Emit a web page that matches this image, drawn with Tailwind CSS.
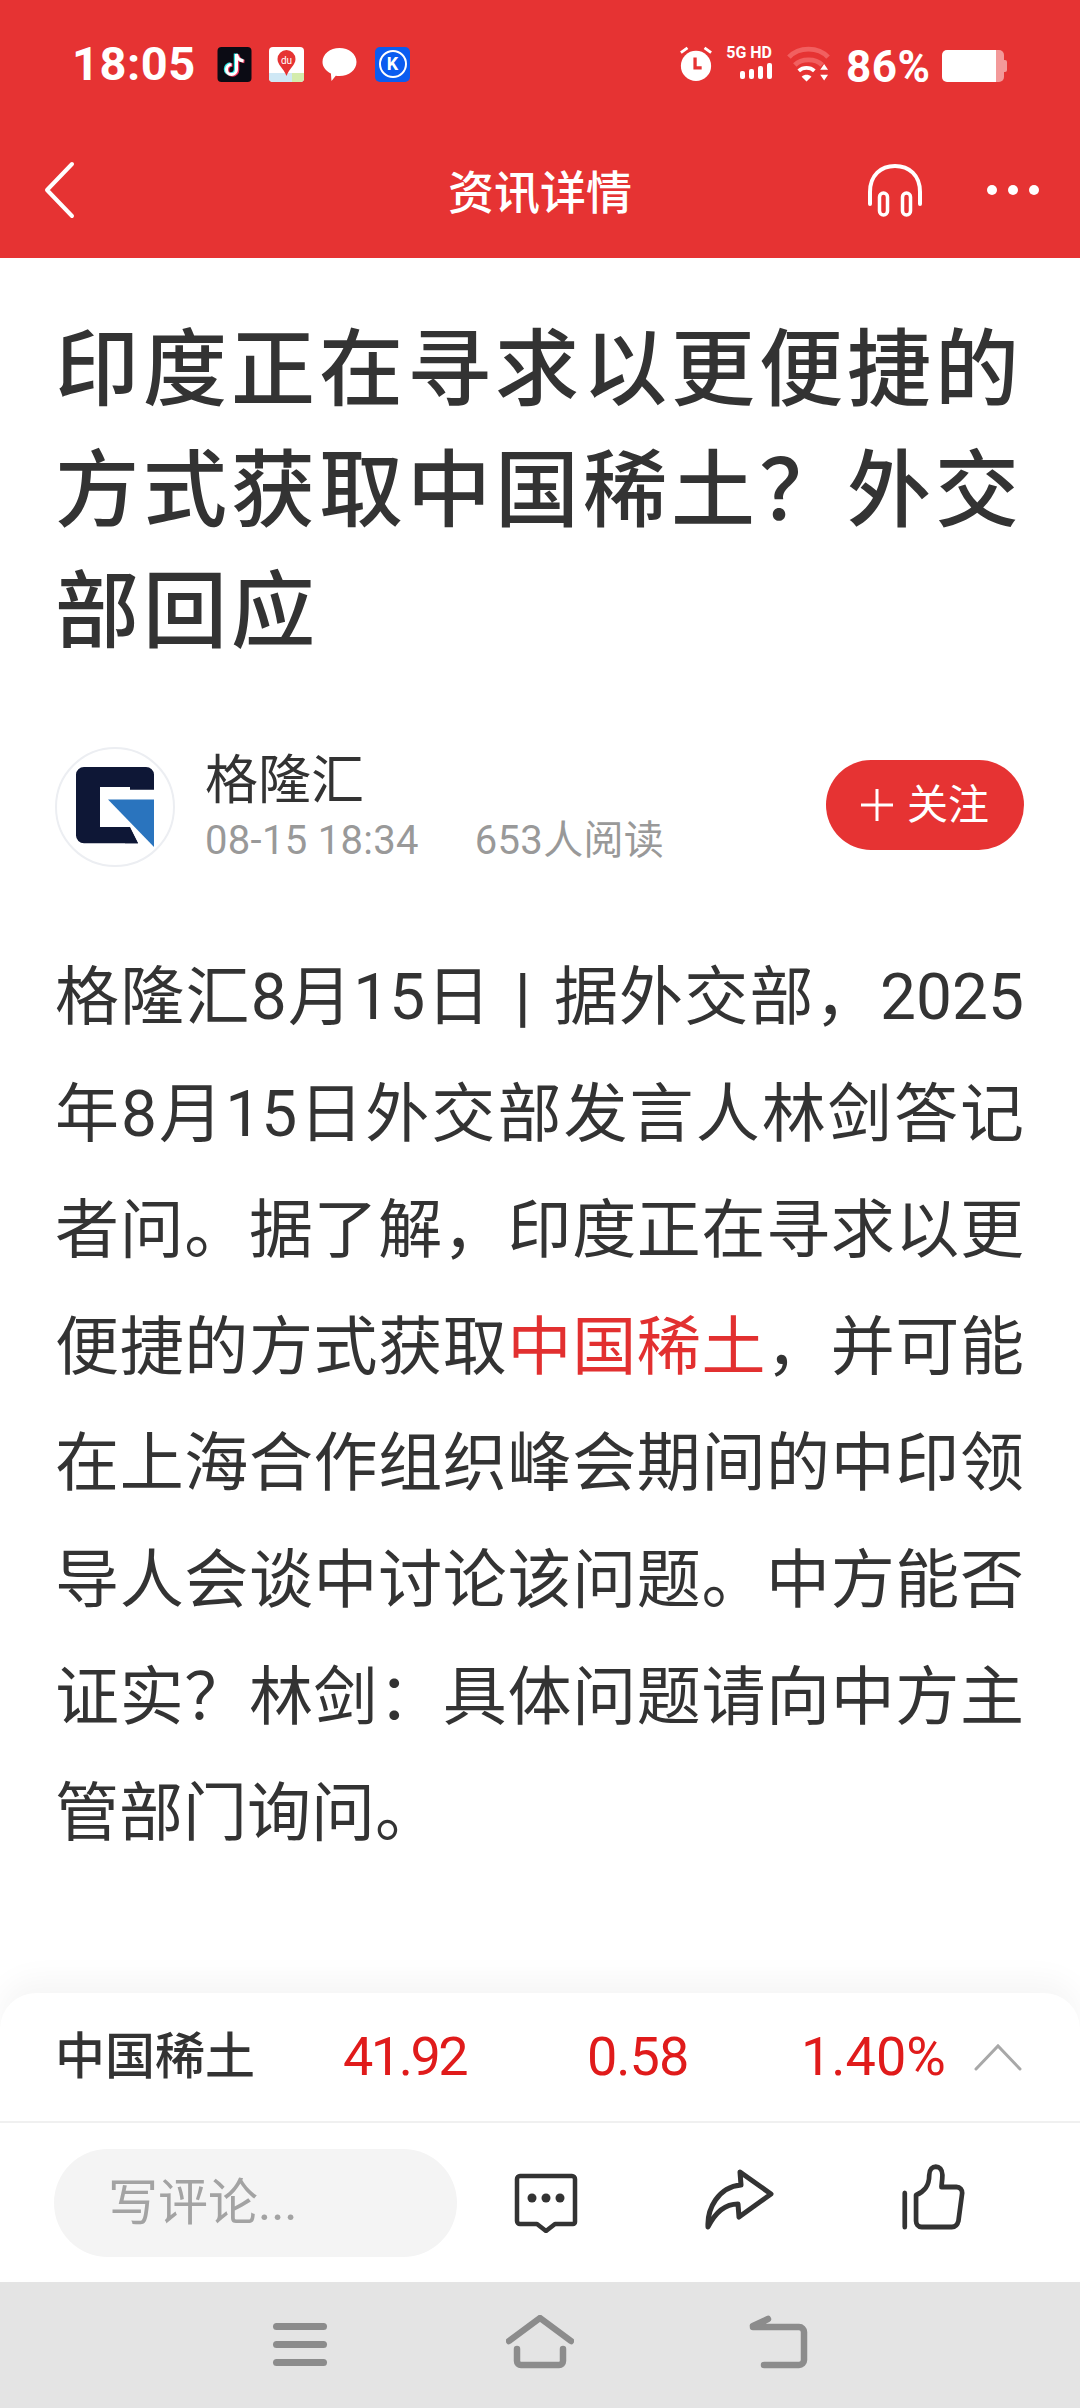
<!DOCTYPE html>
<html lang="zh-CN">
<head>
  <meta charset="UTF-8">
  <meta name="viewport" content="width=device-width, initial-scale=1.0">
  <title>资讯详情</title>
  <script src="https://cdn.jsdelivr.net/npm/@tailwindcss/browser@4"></script>
</head>
<body class="bg-white">
  <div class="w-[1080px] h-[2408px] flex flex-col overflow-hidden font-['Roboto','Noto_Sans_CJK_SC',sans-serif] text-[#333333]">

    <!-- red header -->
    <header class="h-[258px] shrink-0 bg-[#e63333] text-white">
      <div class="h-[126px] pl-[72px] pr-[73px] pt-[46px] flex justify-between items-start">
        <div class="flex items-center">
          <span class="text-[47px] leading-[36px] font-bold w-[145px] tracking-[0.5px]">18:05</span>
          <!-- tiktok -->
          <svg class="w-[35px] h-[35px]" viewBox="0 0 34 35">
            <rect width="34" height="35" rx="4" fill="#0b0b14"/>
            <path d="M19 7v15.500a5 5 0 1 1-5-5M19 7c.5 4 3.500 6.500 7 7" fill="none" stroke="#2fe6e6" stroke-width="3.500" transform="translate(-1 -.5)"/>
            <path d="M19 7v15.500a5 5 0 1 1-5-5M19 7c.5 4 3.500 6.500 7 7" fill="none" stroke="#f0365a" stroke-width="3.500" transform="translate(1 .5)"/>
            <path d="M19 7v15.500a5 5 0 1 1-5-5M19 7c.5 4 3.500 6.500 7 7" fill="none" stroke="#ffffff" stroke-width="3"/>
          </svg>
          <!-- baidu maps -->
          <div class="relative ml-[17px] w-[35px] h-[35px] rounded-[4px] bg-white overflow-hidden">
            <div class="absolute bottom-0 left-0 w-full h-[9px] bg-[#cfe8f5]"></div>
            <div class="absolute bottom-0 right-0 w-[12px] h-[9px] bg-[#d4ecac]"></div>
            <svg class="absolute left-[8px] top-[3px] w-[19px] h-[27px]" viewBox="0 0 18 27">
              <path d="M9 0a9 9 0 0 1 9 9c0 6-6 9-9 17C6 18 0 15 0 9a9 9 0 0 1 9-9z" fill="#e63333"/>
            </svg>
            <span class="absolute left-0 top-[8px] w-full text-center text-[10px] leading-[11px] text-white">du</span>
          </div>
          <!-- message bubble -->
          <svg class="ml-[18px] w-[35px] h-[35px]" viewBox="0 0 34 35">
            <path d="M17 1c9.400 0 17 5.900 17 14s-7.600 14-17 14c-1.300 0-2.500-.1-3.700-.3L9 34l-.6-7.400C3.300 24 0 19.800 0 15 0 6.900 7.600 1 17 1z" fill="#fff"/>
          </svg>
          <!-- K app -->
          <div class="ml-[18px] w-[35px] h-[35px] rounded-[5px] bg-[#0a5cf0] flex items-center justify-center">
            <div class="w-[28px] h-[28px] rounded-full border-[2px] border-white flex items-center justify-center text-[18px] leading-none font-bold">K</div>
          </div>
        </div>

        <div class="flex items-start">
          <!-- alarm -->
          <svg class="w-[34px] h-[36px]" viewBox="0 0 36 38">
            <circle cx="18" cy="21" r="16" fill="#fff"/>
            <path d="M17 12v11h7" fill="none" stroke="#e63333" stroke-width="3.500"/>
            <path d="M2 7l7-5M34 7l-7-5" stroke="#fff" stroke-width="3"/>
          </svg>
          <!-- 5G HD + signal -->
          <div class="ml-[11px] w-[48px] flex flex-col items-end">
            <span class="text-[16px] leading-[14px] font-bold whitespace-nowrap">5G HD</span>
            <div class="mt-[3px] flex items-end gap-[4px]">
              <span class="w-[5px] h-[8px] rounded-[2px] bg-white"></span>
              <span class="w-[5px] h-[10px] rounded-[2px] bg-white"></span>
              <span class="w-[5px] h-[13px] rounded-[2px] bg-white"></span>
              <span class="w-[5px] h-[16px] rounded-[2px] bg-white"></span>
            </div>
          </div>
          <!-- wifi -->
          <svg class="ml-[15px] w-[43px] h-[36px]" viewBox="0 0 44 36">
            <path d="M2 11c10-11 30-11 40 0" fill="none" stroke="#f16060" stroke-width="5"/>
            <path d="M8 19c7-7 21-7 28 0" fill="none" stroke="#f16060" stroke-width="5"/>
            <path d="M12 25c4.500-4 11.500-4 16 0" fill="none" stroke="#fff" stroke-width="4"/>
            <path d="M15 31c3-2.500 7-2.500 10 0l-5 5z" fill="#fff"/>
            <path d="M38 18l4 6h-8zM38 35l4-6h-8z" fill="#fff"/>
          </svg>
          <span class="ml-[16px] mt-[4px] w-[82px] text-[44px] leading-[34px] font-bold tracking-[0.5px]">86%</span>
          <!-- battery -->
          <div class="ml-[14px] mt-[3px] w-[65px] h-[33px] flex items-center">
            <div class="w-[54px] h-[32px] rounded-l-[5px] bg-white"></div>
            <div class="w-[8px] h-[32px] rounded-r-[5px] bg-white/50"></div>
            <div class="w-[3px] h-[12px] rounded-r-[2px] bg-white/50"></div>
          </div>
        </div>
      </div>

      <div class="relative h-[132px] pt-[13px]">
        <div class="h-[108px] flex items-center justify-center">
          <h1 class="text-[46px] font-medium leading-none">资讯详情</h1>
        </div>
        <svg class="absolute left-[43px] top-[35px] w-[32px] h-[58px]" viewBox="0 0 32 58">
          <path d="M29 3L4 29l25 26" fill="none" stroke="#fff" stroke-width="4" stroke-linecap="round" stroke-linejoin="round"/>
        </svg>
        <svg class="absolute left-[867px] top-[37px] w-[56px] h-[56px]" viewBox="0 0 56 56">
          <path d="M3 41V29C3 12 14 3 28 3s25 9 25 26v12" fill="none" stroke="#fff" stroke-width="4" stroke-linecap="round"/>
          <rect x="12.500" y="30" width="8" height="22" rx="4" fill="none" stroke="#fff" stroke-width="3.500"/>
          <rect x="35.500" y="30" width="8" height="22" rx="4" fill="none" stroke="#fff" stroke-width="3.500"/>
        </svg>
        <div class="absolute left-[987px] top-[59px] flex gap-[11px]">
          <span class="w-[10px] h-[10px] rounded-full bg-white"></span>
          <span class="w-[10px] h-[10px] rounded-full bg-white"></span>
          <span class="w-[10px] h-[10px] rounded-full bg-white"></span>
        </div>
      </div>
    </header>

    <!-- article -->
    <main class="flex-1 min-h-0 pl-[55px] pr-[56px] pt-[52px]">
      <h2 class="-mr-[4px] text-[84px] leading-[121px] font-medium tracking-[4px]">印度正在寻求以更便捷的方式获取中国稀土？外交部回应</h2>

      <div class="mt-[73px] flex items-center h-[122px]">
        <div class="w-[120px] h-[120px] rounded-full border-[2px] border-[#eceef2] bg-white flex items-center justify-center">
          <svg class="w-[78px] h-[80px]" viewBox="0 0 78 84" preserveAspectRatio="none">
            <path d="M8 0h62a8 8 0 0 1 8 8v16H54v-3H24v42h30L62 80H8a8 8 0 0 1-8-8V8a8 8 0 0 1 8-8z" fill="#0e1736"/>
            <path d="M32 34h46v50z" fill="#2a74be"/>
            <path d="M54 64h-5v16h13z" fill="#0e1736"/>
          </svg>
        </div>
        <div class="ml-[30px] flex-1">
          <div class="text-[53px] leading-[62px]">格隆汇</div>
          <div class="mt-[6px] text-[40px] leading-[46px] tracking-[0.3px] text-[#999999]">
            <span>08-15 18:34</span><span class="ml-[56px]">653人阅读</span>
          </div>
        </div>
        <div class="-mt-[4px] w-[198px] h-[90px] rounded-full bg-[#e63333] text-white flex items-center justify-center text-[41px] leading-none">
          <svg class="w-[32px] h-[32px] mr-[14px]" viewBox="0 0 32 32"><path d="M16 0v32M0 16h32" stroke="#fff" stroke-width="3"/></svg>
          <span>关注</span>
        </div>
      </div>

      <p class="mt-[72px] text-[64px] leading-[116.600px] text-justify">格隆汇8月15日<span class="mx-[6px] font-medium"> | </span>据外交部，2025年8月15日外交部发言人林剑答记者问。据了解，印度正在寻求以更便捷的方式获取<span class="text-[#e23030]">中国稀土</span>，并可能在上海合作组织峰会期间的中印领导人会谈中讨论该问题。中方能否证实？林剑：具体问题请向中方主管部门询问。</p>
    </main>

    <!-- stock strip + actions -->
    <section class="relative shrink-0 h-[289px] rounded-t-[36px] bg-white shadow-[0_-14px_30px_rgba(0,0,0,0.04)]">
      <div class="h-[130px] flex items-center pl-[55px] border-b-[2px] border-[#f0f0f0]">
        <span class="w-[288px] text-[50px] leading-none font-medium">中国稀土</span>
        <span class="w-[244px] text-[54px] leading-none tracking-[-2.500px] text-[#e01b1b]">41.92</span>
        <span class="w-[214px] text-[54px] leading-none tracking-[-1px] text-[#e01b1b]">0.58</span>
        <span class="w-[173px] text-[54px] leading-none text-[#e01b1b]">1.40%</span>
        <svg class="w-[48px] h-[28px]" viewBox="0 0 48 28"><path d="M2 26L24 3l22 23" fill="none" stroke="#a8a8a8" stroke-width="3" stroke-linecap="round"/></svg>
      </div>
      <div class="relative h-[159px]">
        <div class="absolute left-[54px] top-[26px] w-[403px] h-[108px] rounded-full bg-[#f4f4f4] flex items-center pl-[54px] text-[50px] leading-none text-[#a3a3a3]">写评论...</div>
        <svg class="absolute left-[514px] top-[50px] w-[64px] h-[60px]" viewBox="0 0 64 60">
          <path d="M6 3h52a3 3 0 0 1 3 3v43a2 2 0 0 1-2 2H41l-9 7-9-7H6a3 3 0 0 1-3-3V6a3 3 0 0 1 3-3z" fill="none" stroke="#333" stroke-width="4.500" stroke-linejoin="round"/>
          <circle cx="18" cy="25" r="4.500" fill="#333"/><circle cx="32" cy="25" r="4.500" fill="#333"/><circle cx="46" cy="25" r="4.500" fill="#333"/>
        </svg>
        <svg class="absolute left-[704px] top-[46px] w-[70px] h-[62px]" viewBox="0 0 70 62">
          <path d="M36 3L67 25 35 48l-1-13C20 35 10 46 4 58 3 40 14 18 37 16z" fill="none" stroke="#333" stroke-width="5" stroke-linejoin="round" stroke-linecap="round"/>
        </svg>
        <svg class="absolute left-[901px] top-[40px] w-[64px] h-[68px]" viewBox="0 0 68 68" preserveAspectRatio="none">
          <path d="M4 30v34" stroke="#333" stroke-width="5" stroke-linecap="round"/>
          <path d="M16 32c8-3 14-8 14-20 0-11 14-11 14 0 0 5-1 10-1 12h16c4 0 6 3 6 6l-4 28c-1 4-3 6-7 6H22c-4 0-6-3-6-6z" fill="none" stroke="#333" stroke-width="5" stroke-linejoin="round"/>
        </svg>
      </div>
    </section>

    <!-- android nav -->
    <nav class="relative shrink-0 h-[126px] bg-[#e4e4e4]">
      <div class="absolute left-[273px] top-[41px] w-[54px] flex flex-col gap-[11px]">
        <span class="h-[7px] rounded-full bg-[#8c8c8c]"></span>
        <span class="h-[7px] rounded-full bg-[#8c8c8c]"></span>
        <span class="h-[7px] rounded-full bg-[#8c8c8c]"></span>
      </div>
      <svg class="absolute left-[506px] top-[33px] w-[68px] h-[54px]" viewBox="0 0 68 54">
        <path d="M3 26L34 3l31 23M11 34v12a4 4 0 0 0 4 4h38a4 4 0 0 0 4-4V34" fill="none" stroke="#8c8c8c" stroke-width="6.500" stroke-linecap="round" stroke-linejoin="round"/>
      </svg>
      <svg class="absolute left-[749px] top-[33px] w-[60px] h-[54px]" viewBox="0 0 60 54">
        <path d="M4 12h46a5 5 0 0 1 5 5v28a5 5 0 0 1-5 5H15M4 11l15-7" fill="none" stroke="#8c8c8c" stroke-width="6.500" stroke-linecap="round" stroke-linejoin="round"/>
      </svg>
    </nav>
  </div>
</body>
</html>
